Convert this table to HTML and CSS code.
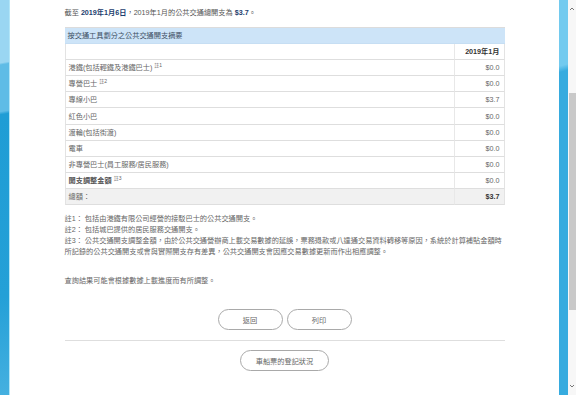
FILE: index.html
```html
<!DOCTYPE html>
<html lang="zh-Hant">
<head>
<meta charset="utf-8">
<title>公共交通開支摘要</title>
<link rel="stylesheet" href="styles.css">
</head>
<body>
<div class="page">
  <div class="strip strip-left"></div>
  <main class="main">
    <div class="content">
      <p class="summary">截至 <b>2019年1月6日</b>，2019年1月的公共交通總開支為 <b>$3.7</b>。</p>
      <table class="expense">
        <tr class="caption-row"><th colspan="2">按交通工具劃分之公共交通開支摘要</th></tr>
        <tr class="head-row"><td></td><td class="amt"><b>2019年1月</b></td></tr>
        <tr><td>港鐵(包括輕鐵及港鐵巴士) <sup class="ref">註1</sup></td><td class="amt">$0.0</td></tr>
        <tr><td>專營巴士 <sup class="ref">註2</sup></td><td class="amt">$0.0</td></tr>
        <tr><td>專線小巴</td><td class="amt">$3.7</td></tr>
        <tr><td>紅色小巴</td><td class="amt">$0.0</td></tr>
        <tr><td>渡輪(包括街渡)</td><td class="amt">$0.0</td></tr>
        <tr><td>電車</td><td class="amt">$0.0</td></tr>
        <tr><td>非專營巴士(員工服務/居民服務)</td><td class="amt">$0.0</td></tr>
        <tr><td><span class="strong">開支調整金額</span> <sup class="ref">註3</sup></td><td class="amt">$0.0</td></tr>
        <tr class="total-row"><td>總額：</td><td class="amt"><b>$3.7</b></td></tr>
      </table>
      <div class="notes">
        <p>註1： 包括由港鐵有限公司經營的接駁巴士的公共交通開支。</p>
        <p>註2： 包括城巴提供的居民服務交通開支。</p>
        <p>註3： 公共交通開支調整金額，由於公共交通營辦商上載交易數據的延誤，票務退款或八達通交易資料轉移等原因，系統於計算補貼金額時所記錄的公共交通開支或會與實際開支存有差異，公共交通開支會因應交易數據更新而作出相應調整。</p>
      </div>
      <p class="remark">查詢結果可能會根據數據上載進度而有所調整。</p>
      <div class="actions">
        <button class="btn">返回</button>
        <button class="btn">列印</button>
      </div>
      <hr class="divider">
      <div class="actions actions-second">
        <button class="btn btn-wide">車船票的登記狀況</button>
      </div>
    </div>
  </main>
  <div class="strip strip-right"></div>
  <div class="scrollbar">
    <svg class="arrow" width="8" height="8" viewBox="0 0 8 8"><path d="M2 5 L4 3 L6 5" fill="none" stroke="#777" stroke-width="1"/></svg>
    <div class="track"><div class="thumb"></div></div>
    <svg class="arrow" width="8" height="8" viewBox="0 0 8 8"><path d="M2 3 L4 5 L6 3" fill="none" stroke="#777" stroke-width="1"/></svg>
  </div>
</div>
</body>
</html>
```
FILE: styles.css
```css
html, body {
  margin: 0;
  padding: 0;
  background: #fff;
}
body {
  font-family: "Liberation Sans", Arial, "Noto Sans CJK TC", sans-serif;
  font-size: 7.2px;
  color: #666;
}
.page {
  display: flex;
  height: 395px;
  overflow: hidden;
}
.strip-left {
  width: 9px;
  flex: none;
  border-right: 1px solid #b3e6f8;
  background: linear-gradient(170deg, #9ad6f2 0, #9ad6f2 62px, #5fbce6 64px, #5fbce6 110px, #1f9dd5 113px, #24a0d7 75%, #45b0e0 100%);
}
.strip-right {
  width: 9px;
  flex: none;
  background: linear-gradient(165deg, #72caef 0, #72caef 64px, #36abdf 70px, #36abdf 100%);
}
.scrollbar {
  width: 8px;
  flex: none;
  background: #f7f7f7;
  display: flex;
  flex-direction: column;
}
.arrow {
  display: block;
  flex: none;
  margin: 5px 0 0;
}
.scrollbar .arrow:last-child {
  margin: 0 0 5px;
}
.track {
  flex: 1;
  padding: 80px 0 72px 1px;
}
.thumb {
  height: 100%;
  background: #c9c9c9;
}
.main {
  flex: 1;
  display: flex;
  justify-content: center;
}
.content {
  width: 440px;
  padding-top: 8px;
}
.summary {
  margin: 0;
  line-height: 10px;
  color: #555;
}
.summary b {
  color: #1c3d6e;
}
.expense {
  width: 100%;
  margin-top: 9px;
  border-spacing: 0;
  border-top: 1px solid #dcdcdc;
}
.expense th,
.expense td {
  height: 15.1px;
  padding: 0 3px;
  line-height: 15px;
  border-bottom: 1px solid #dedede;
  text-align: left;
  white-space: nowrap;
}
.expense td:first-child {
  border-left: 1px solid #e3e3e3;
}
.expense td.amt {
  width: 42px;
  text-align: right;
  padding-right: 4px;
  border-left: 1px solid #e8e8e8;
  border-right: 1px solid #e3e3e3;
}
.caption-row th {
  background: #cde4f8;
  color: #3c4e63;
  font-weight: normal;
  border-bottom-color: #c6def3;
}
.head-row b,
.total-row b {
  color: #333;
}
.total-row td {
  background: #f1f1f1;
}
.strong {
  font-weight: bold;
  color: #555;
}
.ref {
  font-size: 5px;
  line-height: 0;
  vertical-align: 3px;
}
.notes {
  margin-top: 8px;
}
.notes p {
  margin: 0;
  line-height: 11px;
}
.remark {
  margin: 18px 0 0;
  line-height: 11px;
}
.actions {
  display: flex;
  justify-content: center;
  gap: 4px;
  margin-top: 23px;
}
.btn {
  width: 65px;
  height: 21px;
  padding: 0;
  border: 1px solid #a9a9a9;
  border-radius: 11px;
  background: #fff;
  color: #666;
  font: inherit;
}
.btn-wide {
  width: 89px;
}
.divider {
  border: 0;
  border-top: 1px solid #dedede;
  margin: 10px 0 0;
}
.actions-second {
  margin-top: 9px;
}
```
